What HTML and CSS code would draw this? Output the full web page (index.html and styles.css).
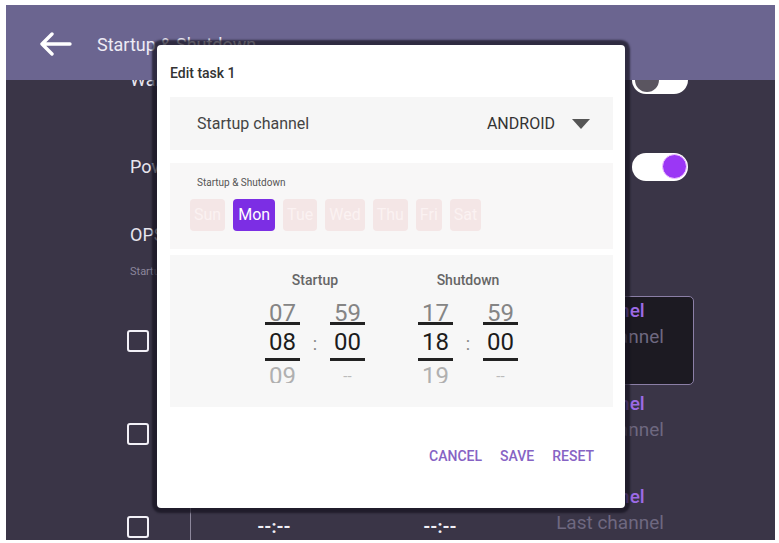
FILE: index.html
```html
<!DOCTYPE html>
<html lang="en">
<head>
  <meta charset="UTF-8">
  <meta name="viewport" content="width=device-width, initial-scale=1.0">
  <title>Startup &amp; Shutdown</title>
  <link rel="stylesheet" href="styles.css">
</head>
<body>
  <div class="screen">
    <div class="appbar">
      <svg class="back" width="34" height="24" viewBox="0 0 34 24">
        <path d="M32 12H4M14 2L4 12l10 10" fill="none" stroke="#fff" stroke-width="3.4" stroke-linecap="round" stroke-linejoin="round"/>
      </svg>
      <span class="appbar-title">Startup &amp; Shutdown</span>
    </div>

    <div class="list">
      <div class="setting">
        <span>Wake on LAN</span>
        <span class="switch"><span class="knob"></span></span>
      </div>
      <div class="setting">
        <span>Power on schedule</span>
        <span class="switch on"><span class="knob"></span></span>
      </div>

      <div class="section-title">OPS schedule</div>
      <div class="section-sub">Startup channel</div>

      <div class="task">
        <div class="task-check"><span class="checkbox"></span></div>
        <div class="task-cell first">--:--</div>
        <div class="task-cell">--:--</div>
        <div class="task-channel">
          <div class="channel-box selected">
            <div class="channel-label">Channel</div>
            <div class="channel-value">Last channel</div>
          </div>
        </div>
      </div>
      <div class="task">
        <div class="task-check"><span class="checkbox"></span></div>
        <div class="task-cell first">--:--</div>
        <div class="task-cell">--:--</div>
        <div class="task-channel">
          <div class="channel-box">
            <div class="channel-label">Channel</div>
            <div class="channel-value">Last channel</div>
          </div>
        </div>
      </div>
      <div class="task">
        <div class="task-check"><span class="checkbox"></span></div>
        <div class="task-cell first">--:--</div>
        <div class="task-cell">--:--</div>
        <div class="task-channel">
          <div class="channel-box">
            <div class="channel-label">Channel</div>
            <div class="channel-value">Last channel</div>
          </div>
        </div>
      </div>
    </div>

    <!-- Edit dialog -->
    <div class="dialog">
      <div class="dialog-title">Edit task 1</div>

      <div class="channel-row">
        <span>Startup channel</span>
        <span class="select">ANDROID <span class="caret"></span></span>
      </div>

      <div class="days">
        <div class="days-label">Startup &amp; Shutdown</div>
        <div class="chips">
          <span class="chip">Sun</span>
          <span class="chip active">Mon</span>
          <span class="chip">Tue</span>
          <span class="chip">Wed</span>
          <span class="chip">Thu</span>
          <span class="chip">Fri</span>
          <span class="chip">Sat</span>
        </div>
      </div>

      <div class="times">
        <div class="time-group">
          <div class="time-label">Startup</div>
          <div class="picker">
            <div class="wheel">
              <div class="prev">07</div>
              <div class="cur">08</div>
              <div class="next">09</div>
            </div>
            <span class="colon">:</span>
            <div class="wheel">
              <div class="prev">59</div>
              <div class="cur">00</div>
              <div class="next dash">--</div>
            </div>
          </div>
        </div>
        <div class="time-group">
          <div class="time-label">Shutdown</div>
          <div class="picker">
            <div class="wheel">
              <div class="prev">17</div>
              <div class="cur">18</div>
              <div class="next">19</div>
            </div>
            <span class="colon">:</span>
            <div class="wheel">
              <div class="prev">59</div>
              <div class="cur">00</div>
              <div class="next dash">--</div>
            </div>
          </div>
        </div>
      </div>

      <div class="dialog-actions">
        <button>CANCEL</button>
        <button>SAVE</button>
        <button>RESET</button>
      </div>
    </div>
  </div>
</body>
</html>
```

FILE: styles.css
```css
body {
  margin: 0;
  padding: 5px 0 0 6px;
  background-color: #fff;
  font-family: Roboto, "Liberation Sans", sans-serif;
}

.screen {
  position: relative;
  width: 769px;
  height: 535px;
  overflow: hidden;
  background-color: #3a3547;
}

/* Top bar */
.appbar {
  position: relative;
  z-index: 2;
  display: flex;
  align-items: center;
  gap: 25px;
  height: 75px;
  padding: 3px 0 0 32px;
  box-sizing: border-box;
  background-color: #6b6590;
}

.appbar-title {
  font-size: 18px;
  color: #eeebf5;
}

/* Settings list behind the dialog */
.list {
  margin-top: -43px;
  padding: 0 87px 0 124px;
  color: #e8e6ef;
}

.setting {
  display: flex;
  justify-content: space-between;
  align-items: center;
  height: 85px;
  font-size: 18px;
}

.setting + .setting {
  margin-top: 2px;
}

.switch {
  position: relative;
  width: 56px;
  height: 28px;
  border-radius: 14px;
  background-color: #fff;
}

.switch .knob {
  position: absolute;
  left: 3px;
  top: 2px;
  width: 24px;
  height: 24px;
  border-radius: 50%;
  background-color: #5a5560;
}

.switch.on .knob {
  left: auto;
  right: 1px;
  top: 1px;
  width: 23px;
  height: 23px;
  background-color: #9b37f5;
  border: 1px solid #f0c8ff;
}

.section-title {
  margin-top: 15px;
  font-size: 18px;
  line-height: 22px;
}

.section-sub {
  margin-top: 19px;
  margin-bottom: 15px;
  font-size: 11px;
  line-height: 14px;
  color: #8c879c;
}

.task {
  display: flex;
  align-items: center;
  height: 93px;
  margin-left: -3px;
}

.task-check {
  flex: 0 0 63px;
}

.checkbox {
  display: block;
  width: 18px;
  height: 18px;
  border: 2.5px solid #f2f0f7;
  border-radius: 3px;
}

.task-cell {
  flex: 0 0 166px;
  align-self: stretch;
  display: flex;
  align-items: center;
  justify-content: center;
  font-size: 18px;
  font-weight: 700;
  color: #f2f0f7;
}

.task-cell.first {
  border-left: 1px solid #8d889c;
}

.task-channel {
  flex: 0 0 174px;
  align-self: stretch;
}

.channel-box {
  height: 84px;
  margin: 2px 3px 0;
  padding-top: 3px;
  border: 1.5px solid transparent;
  border-radius: 5px;
  text-align: center;
  font-size: 19px;
  line-height: 22px;
}

.channel-box.selected {
  background-color: #1c1a22;
  border-color: #8b7fa6;
}

.channel-label {
  font-weight: 500;
  color: #9d6be6;
}

.channel-value {
  margin-top: 4px;
  color: #6e6880;
}

/* Dialog */
.dialog {
  position: absolute;
  z-index: 3;
  left: 151px;
  top: 40px;
  width: 468px;
  height: 463px;
  padding: 18px 12px 0 13px;
  box-sizing: border-box;
  background-color: #fff;
  border-radius: 4px;
  box-shadow: 0 0 2px 5px rgba(22, 18, 32, 0.7);
}

.dialog-title {
  font-size: 14px;
  font-weight: 500;
  line-height: 20px;
  color: #333;
}

.channel-row {
  display: flex;
  justify-content: space-between;
  align-items: center;
  height: 53px;
  margin-top: 14px;
  padding: 0 23px 0 27px;
  background-color: #f6f6f6;
  font-size: 16px;
  color: #444;
}

.select {
  display: flex;
  align-items: center;
  gap: 17px;
  color: #333;
}

.caret {
  width: 0;
  height: 0;
  border-left: 9px solid transparent;
  border-right: 9px solid transparent;
  border-top: 10px solid #555;
}

.days {
  height: 86px;
  margin-top: 13px;
  padding: 13px 0 0 20px;
  box-sizing: border-box;
  background-color: #f8f7f7;
}

.days-label {
  margin-left: 7px;
  font-size: 10px;
  line-height: 14px;
  color: #555;
}

.chips {
  display: flex;
  gap: 8px;
  margin-top: 9px;
}

.chip {
  height: 32px;
  padding: 0 4px;
  border-radius: 4px;
  line-height: 32px;
  font-size: 16px;
  background-color: #f4e6e6;
  color: #fbf2f2;
}

.chip.active {
  padding: 0 5px;
  background-color: #7c2ee4;
  color: #fff;
}

.times {
  display: flex;
  justify-content: center;
  gap: 53px;
  height: 152px;
  margin-top: 6px;
  padding-top: 17px;
  box-sizing: border-box;
  background-color: #f7f7f7;
}

.time-group {
  width: 100px;
}

.time-label {
  text-align: center;
  font-size: 14px;
  font-weight: 500;
  line-height: 16px;
  color: #666;
}

.picker {
  display: flex;
  justify-content: space-between;
  align-items: center;
  margin-top: 14px;
}

.wheel {
  width: 35px;
  text-align: center;
  font-size: 24px;
}

.wheel .prev {
  height: 20px;
  line-height: 22px;
  color: #858585;
}

.wheel .cur {
  height: 33px;
  line-height: 34px;
  border-top: 3px solid #222;
  border-bottom: 3px solid #222;
  color: #1c1c1c;
}

.wheel .next {
  height: 22px;
  line-height: 30px;
  overflow: hidden;
  color: #b0b0b0;
}

.wheel .next.dash {
  font-size: 15px;
  color: #bbb;
}

.colon {
  font-size: 18px;
  color: #888;
  padding-top: 1px;
}

.dialog-actions {
  display: flex;
  justify-content: flex-end;
  gap: 18px;
  margin-top: 39px;
  padding-right: 19px;
}

.dialog-actions button {
  padding: 0;
  border: none;
  background: none;
  font-family: inherit;
  font-size: 14px;
  font-weight: 500;
  line-height: 20px;
  color: #8663c4;
  cursor: pointer;
}
```
